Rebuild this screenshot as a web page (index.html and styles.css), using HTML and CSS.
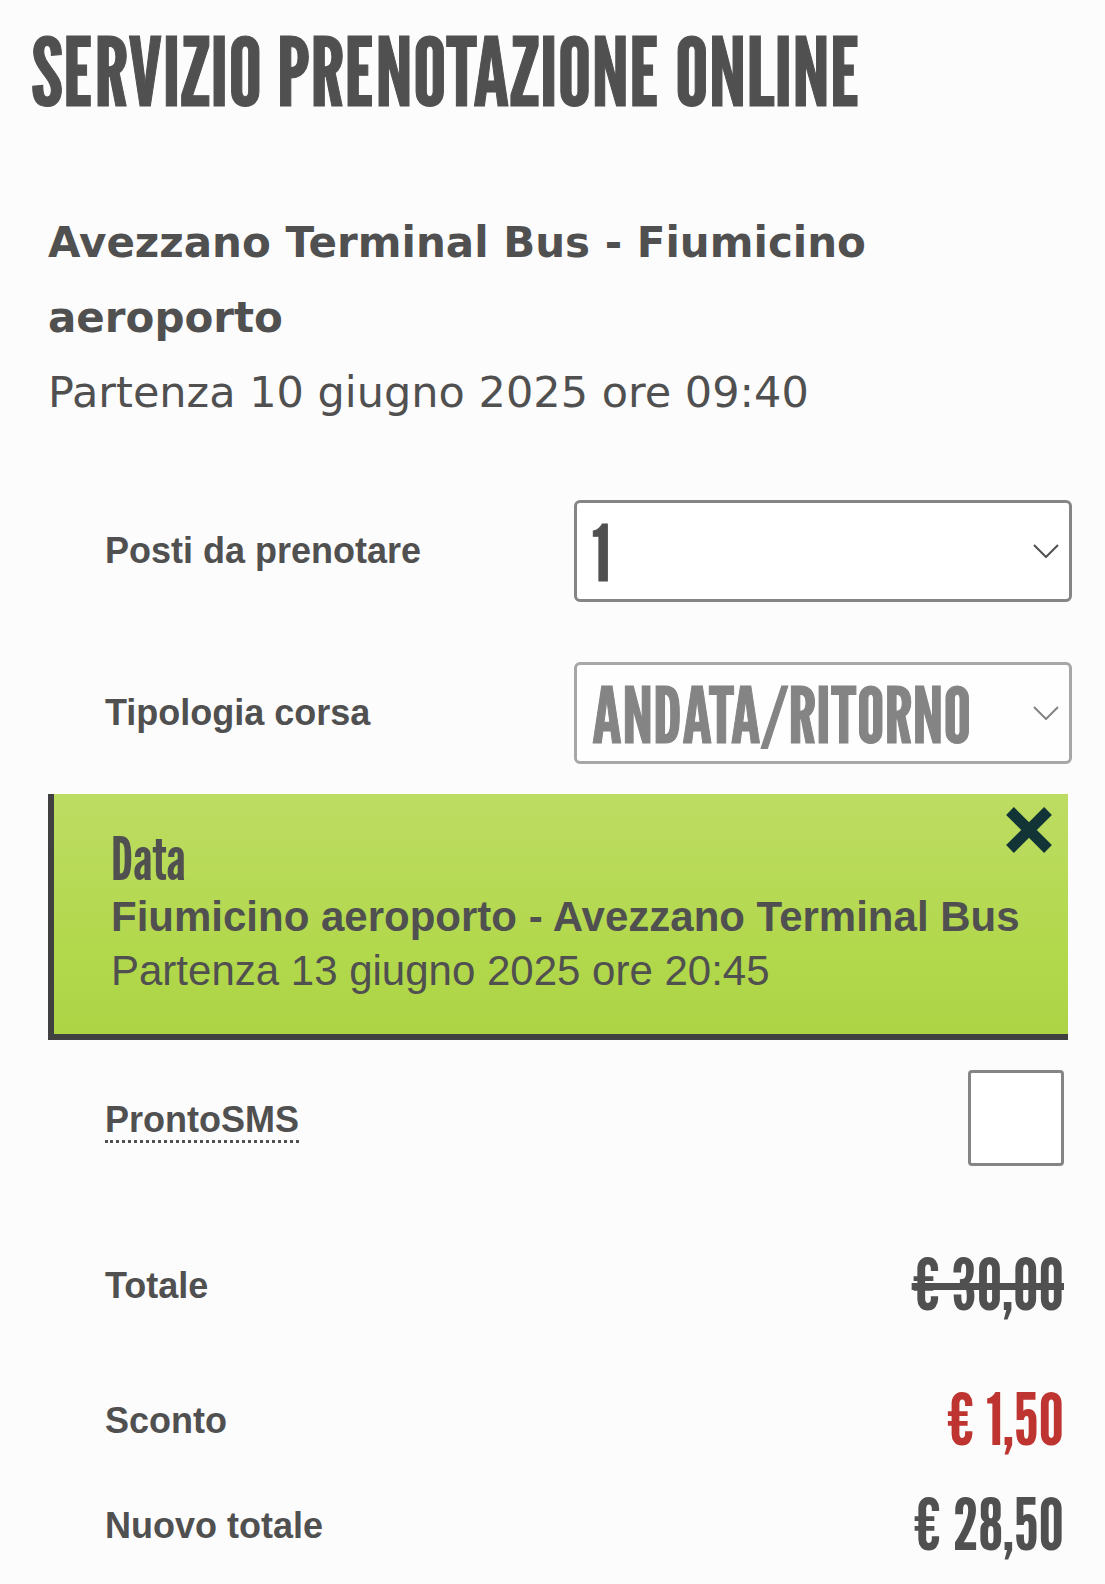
FILE: index.html
```html
<!DOCTYPE html>
<html lang="it">
<head>
<meta charset="utf-8">
<meta name="viewport" content="width=device-width, initial-scale=1">
<title>Servizio prenotazione online</title>
<link rel="stylesheet" href="styles.css">
</head>
<body>
<header class="page-header">
  <h1 class="page-title">SERVIZIO PRENOTAZIONE ONLINE</h1>
</header>
<main class="booking">
  <section class="outbound">
    <h2 class="outbound-route">Avezzano Terminal Bus - Fiumicino aeroporto</h2>
    <p class="outbound-time">Partenza 10 giugno 2025 ore 09:40</p>
  </section>
  <form class="booking-form">
    <div class="field">
      <label class="label" for="seats">Posti da prenotare</label>
      <div class="select-wrap">
        <select class="select" id="seats"><option>1</option><option>2</option><option>3</option></select>
        <svg class="chevron" viewBox="0 0 26 14" aria-hidden="true"><path d="M1 1l12 12L25 1"/></svg>
      </div>
    </div>
    <div class="field">
      <label class="label" for="trip">Tipologia corsa</label>
      <div class="select-wrap is-disabled">
        <select class="select" id="trip" disabled><option>ANDATA/RITORNO</option></select>
        <svg class="chevron" viewBox="0 0 26 14" aria-hidden="true"><path d="M1 1l12 12L25 1"/></svg>
      </div>
    </div>
    <section class="return-card">
      <h2 class="return-title">Data</h2>
      <p class="return-route">Fiumicino aeroporto - Avezzano Terminal Bus</p>
      <p class="return-time">Partenza 13 giugno 2025 ore 20:45</p>
      <button class="remove" type="button" aria-label="Rimuovi ritorno">
        <svg class="remove-icon" viewBox="0 0 48 48" aria-hidden="true"><path d="M5 5l38 38M43 5L5 43"/></svg>
      </button>
    </section>
    <div class="line">
      <label class="label" for="sms"><span class="hint">ProntoSMS</span></label>
      <input class="checkbox" type="checkbox" id="sms">
    </div>
    <dl class="totals">
      <div class="line line-total"><dt class="label">Totale</dt><dd class="amount amount-old">€ 30,00</dd></div>
      <div class="line line-discount"><dt class="label">Sconto</dt><dd class="amount amount-discount">€ 1,50</dd></div>
      <div class="line"><dt class="label">Nuovo totale</dt><dd class="amount">€ 28,50</dd></div>
    </dl>
  </form>
</main>
</body>
</html>
```

FILE: styles.css
```css
:root {
  --text: #505050;
  --sans: Arial, "Liberation Sans", sans-serif;
  --display: "League Gothic", "Liberation Sans Narrow", "Liberation Sans", sans-serif;
}

* { box-sizing: border-box; }

body {
  margin: 0;
  background: #fcfcfc;
  color: var(--text);
  font-family: var(--sans);
}

h1, h2, p, dl, dd { margin: 0; }

.page-header { padding: 23px 31px 0; }

.page-title {
  font: 400 95px/96px var(--display);
}

/* Thickens the display face slightly without the browser's fake bold. */
.page-title,
.select { -webkit-text-stroke: 1px currentColor; }

.booking { padding: 86px 33px 24px 48px; }

.outbound {
  font-family: Verdana, "DejaVu Sans", sans-serif;
  line-height: 75px;
}

.outbound-route { font-size: 42px; line-height: 75px; }
.outbound-time { font-size: 43px; }

.booking-form { padding-top: 70px; }

.field {
  display: grid;
  grid-template-columns: 16fr 17fr;
  align-items: center;
  padding-left: 57px;
  margin-bottom: 60px;
}

.field:nth-of-type(2) { margin-bottom: 30px; }

.label {
  font-size: 36px;
  font-weight: 700;
  line-height: 42px;
}

.select-wrap { display: grid; }

.select-wrap > * { grid-area: 1 / 1; }

.select {
  appearance: none;
  width: 100%;
  height: 102px;
  padding: 4px 48px 0 15px;
  border: 3px solid #858585;
  border-radius: 6px;
  background: #fff;
  color: var(--text);
  font: 400 78px/90px var(--display);
  opacity: 1;
}

.is-disabled .select { border-color: #a7a7a7; color: #848484; background: #fefefe; }

.chevron {
  place-self: center end;
  width: 26px;
  height: 14px;
  margin-right: 13px;
  fill: none;
  stroke: #505050;
  stroke-width: 2;
  pointer-events: none;
}

.is-disabled .chevron { stroke: #848484; }

.return-card {
  position: relative;
  margin-right: 4px;
  padding: 34px 24px 30px 57px;
  border-left: 6px solid #404040;
  border-bottom: 6px solid #404040;
  background: linear-gradient(#bddc63, #b2d84c 65%, #add445);
}

.return-title { font: 400 60px/60px var(--display); padding-bottom: 2px; }
.return-route { font-size: 42px; font-weight: 700; line-height: 54px; }
.return-time { font-size: 42px; line-height: 54px; padding-bottom: 6px; }

.remove {
  position: absolute;
  top: 12px;
  right: 15px;
  padding: 0;
  border: 0;
  background: none;
}

.remove-icon {
  display: block;
  width: 48px;
  height: 48px;
  fill: none;
  stroke: #123436;
  stroke-width: 11;
}

.line {
  display: flex;
  align-items: center;
  justify-content: space-between;
  padding: 0 8px 0 57px;
}

.line .label { padding-top: 4px; }

.return-card + .line { margin-top: 30px; }

.hint { border-bottom: 3px dotted var(--text); }

.checkbox {
  appearance: none;
  width: 96px;
  height: 96px;
  margin: 0;
  border: 3px solid #858585;
  border-radius: 4px;
  background: #fff;
}

.totals { padding-top: 76px; }

.line-total { margin-bottom: 51px; }
.line-discount { margin-bottom: 21px; }

.amount { font: 400 72px/84px var(--display); }
.amount-old { text-decoration: line-through; text-decoration-thickness: 7px; }
.amount-discount { color: #be3430; }
```
